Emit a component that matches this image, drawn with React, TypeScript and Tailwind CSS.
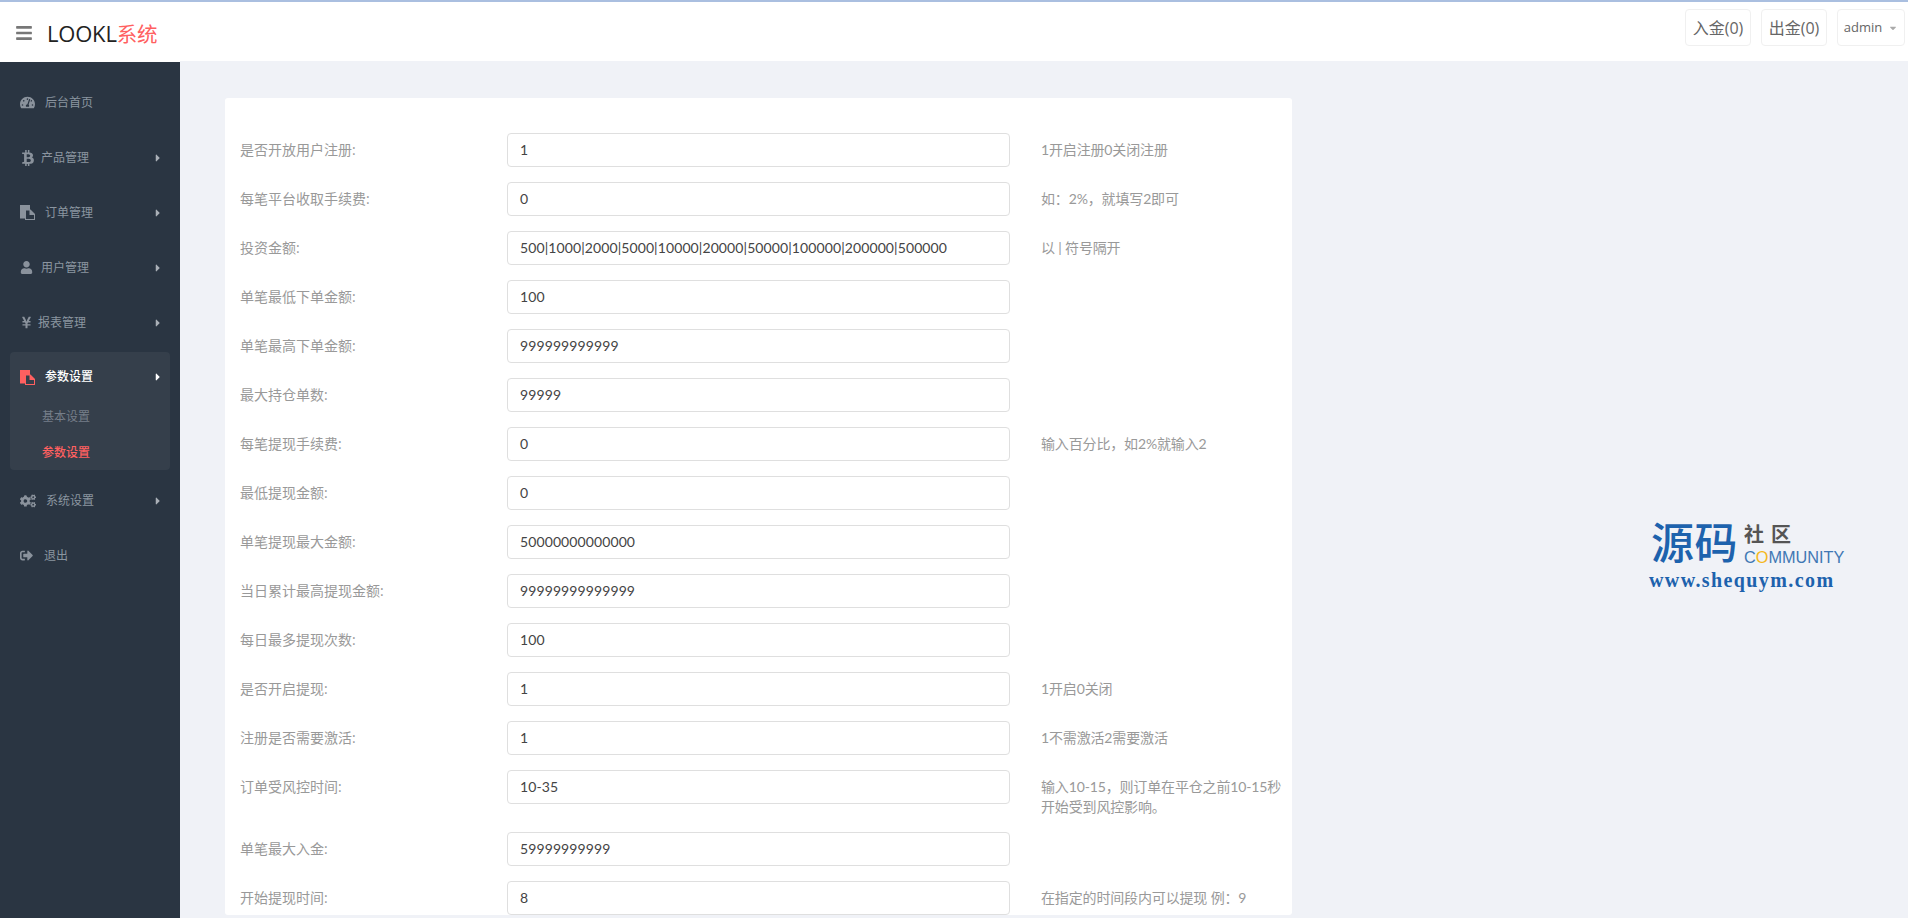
import {FaBars, FaBtc, FaCaretDown, FaCaretRight, FaCogs, FaSignOutAlt, FaTachometerAlt, FaUser, FaYenSign} from "react-icons/fa";
import type {ReactNode} from "react";

const FONT = "font-['Open_Sans','Noto_Sans_CJK_SC',sans-serif]";
const VALUE_FONT = "font-['Lato','Noto_Sans_CJK_SC',sans-serif]";

// fa-files-o: solid back sheet, outlined front sheet with a folded corner
function FilesIcon({className, inner}: {className?: string; inner: string}) {
    return (
        <svg viewBox="0 0 15 15" className={className} fill="currentColor">
            <path d="M0 0h10v13.5H0z" />
            <path d="M5 4.5h5.5L15 9v6H5z" />
            <path d="M6 5.5h3.5v4.4H14V14H6z" fill={inner} />
        </svg>
    );
}

function MenuItem({icon, label, gap, arrow = true}: {icon: ReactNode; label: string; gap: string; arrow?: boolean}) {
    return (
        <div className="flex h-[55px] items-center pl-5 pr-4 text-[12px] text-[#8b95a0]">
            <span className="flex w-4 shrink-0 justify-start text-[#8a929c]">{icon}</span>
            <span className={gap}>{label}</span>
            {arrow && <FaCaretRight className="ml-auto size-[12px] text-[#aab0b7]" />}
        </div>
    );
}

function Sidebar() {
    return (
        <aside className="h-full w-[180px] shrink-0 bg-[#2a3542] pt-[13px]">
            <MenuItem icon={<FaTachometerAlt className="size-[15px] shrink-0" />} label="后台首页" gap="ml-[9px]" arrow={false} />
            <MenuItem icon={<FaBtc className="size-[16px] shrink-0" />} label="产品管理" gap="ml-[5px]" />
            <MenuItem
                icon={<FilesIcon inner="#2a3542" className="size-[15px] shrink-0" />}
                label="订单管理"
                gap="ml-[9px]"
            />
            <MenuItem icon={<FaUser className="size-[13px] shrink-0" />} label="用户管理" gap="ml-[5px]" />
            <MenuItem icon={<FaYenSign className="size-[13px] shrink-0" />} label="报表管理" gap="ml-[2px]" />
            <div className="mx-[10px] mt-[2px] h-[118px] rounded-[4px] bg-[#353f4b]">
                <div className="flex h-[50px] items-center pl-[10px] pr-[6px] text-[12px] text-white">
                    <FilesIcon inner="#353f4b" className="size-[15px] shrink-0 text-[#ff6060]" />
                    <span className="ml-[10px] font-medium">参数设置</span>
                    <FaCaretRight className="ml-auto size-[12px]" />
                </div>
                <div className="pl-8 text-[12px] leading-[20px]">
                    <p className="pt-[5px] text-[#757e89]">基本设置</p>
                    <p className="mt-4 font-medium text-[#ff6060]">参数设置</p>
                </div>
            </div>
            <div className="h-[3px]" />
            <MenuItem icon={<FaCogs className="size-[16px] shrink-0" />} label="系统设置" gap="ml-[10px]" />
            <MenuItem icon={<FaSignOutAlt className="size-[13px] shrink-0" />} label="退出" gap="ml-[8px]" arrow={false} />
        </aside>
    );
}

const ROWS: {label: string; value: string; help?: string}[] = [
    {label: "是否开放用户注册:", value: "1", help: "1开启注册0关闭注册"},
    {label: "每笔平台收取手续费:", value: "0", help: "如\uFF1A2%\uFF0C就填写2即可"},
    {
        label: "投资金额:",
        value: "500|1000|2000|5000|10000|20000|50000|100000|200000|500000",
        help: "以 | 符号隔开",
    },
    {label: "单笔最低下单金额:", value: "100"},
    {label: "单笔最高下单金额:", value: "999999999999"},
    {label: "最大持仓单数:", value: "99999"},
    {label: "每笔提现手续费:", value: "0", help: "输入百分比\uFF0C如2%就输入2"},
    {label: "最低提现金额:", value: "0"},
    {label: "单笔提现最大金额:", value: "50000000000000"},
    {label: "当日累计最高提现金额:", value: "99999999999999"},
    {label: "每日最多提现次数:", value: "100"},
    {label: "是否开启提现:", value: "1", help: "1开启0关闭"},
    {label: "注册是否需要激活:", value: "1", help: "1不需激活2需要激活"},
    {label: "订单受风控时间:", value: "10-35", help: "输入10-15\uFF0C则订单在平仓之前10-15秒开始受到风控影响。"},
    {label: "单笔最大入金:", value: "59999999999"},
    {label: "开始提现时间:", value: "8", help: "在指定的时间段内可以提现 例\uFF1A9"},
];

function Row({label, value, help}: {label: string; value: string; help?: string}) {
    return (
        <div className="mb-[15px] flex items-start">
            <label className="w-[282px] shrink-0 pl-[15px] pt-[7px] text-[14px] leading-[20px] text-[#999]">{label}</label>
            <div className={`h-[34px] w-[503px] shrink-0 rounded-[4px] border border-[#dfdfdf] bg-white pl-[12px] text-[14px] leading-[32px] tracking-[0.1px] text-[#444] ${VALUE_FONT}`}>
                {value}
            </div>
            {help && <p className={`ml-[31px] w-[250px] pt-[7px] text-[14px] leading-[20px] tracking-[-0.15px] text-[#999] ${VALUE_FONT}`}>{help}</p>}
        </div>
    );
}

function HeaderButton({children, width}: {children: ReactNode; width: string}) {
    return (
        <div className={`flex h-[37px] items-center justify-center rounded-[4px] border border-[#f0f0f0] text-[16px] text-[#666] ${width}`}>
            {children}
        </div>
    );
}

// Watermark stamped over the page background
function Watermark() {
    return (
        <div className="absolute left-[1649px] top-[520px] w-[200px] text-[#1d62ad]">
            <div className="flex items-end">
                <span className="pl-[2px] text-[43px] font-medium leading-[46px] tracking-[0.5px]">源码</span>
                <div className="ml-[6px] w-[102px]">
                    <p className="mb-[3px] text-[20px] font-bold leading-[20px] tracking-[7px] text-[#555]">社区</p>
                    <p className="whitespace-nowrap font-['Liberation_Sans',sans-serif] text-[16.3px] leading-[18px] text-[#4178b4]">
                        C<span className="text-[#f5b820]">O</span>MMUNITY
                    </p>
                </div>
            </div>
            <p className="mt-[2px] font-['Liberation_Serif',serif] text-[20px] font-bold leading-[24px] tracking-[1.4px]">
                www.shequym.com
            </p>
        </div>
    );
}

export default function App() {
    return (
        <div className={`relative flex h-[918px] flex-col overflow-hidden bg-[#f0f2f7] ${FONT}`}>
            <header className="flex h-[62px] shrink-0 border-t-2 border-[#aabfe0] bg-white pr-[3px]">
                <FaBars className="ml-[15px] mt-[22px] size-[18px] text-[#777]" />
                <div className="ml-[14px] mt-[16px] text-[22px] leading-[30px] tracking-[-0.2px] text-[#222]">
                    LOOKL<span className="text-[20.5px] text-[#ff6060]">系统</span>
                </div>
                <div className="ml-auto flex items-start gap-[10px] pt-[7px]">
                    <HeaderButton width="w-[66px]">入金(0)</HeaderButton>
                    <HeaderButton width="w-[66px]">出金(0)</HeaderButton>
                    <HeaderButton width="w-[68px]">
                        <span className="text-[13px]">admin</span>
                        <FaCaretDown className="ml-[6px] size-[10px] text-[#aaa]" />
                    </HeaderButton>
                </div>
            </header>
            <div className="flex min-h-0 flex-1">
                <Sidebar />
                <main className="-mt-px min-w-0 flex-1 bg-[#f0f2f7] pl-[45px] pt-[37px]">
                    <div className="w-[1067px] rounded-[3px] bg-white pt-[35px]">
                        {ROWS.map((row) => (
                            <Row key={row.label} {...row} />
                        ))}
                    </div>
                </main>
            </div>
            <Watermark />
        </div>
    );
}
